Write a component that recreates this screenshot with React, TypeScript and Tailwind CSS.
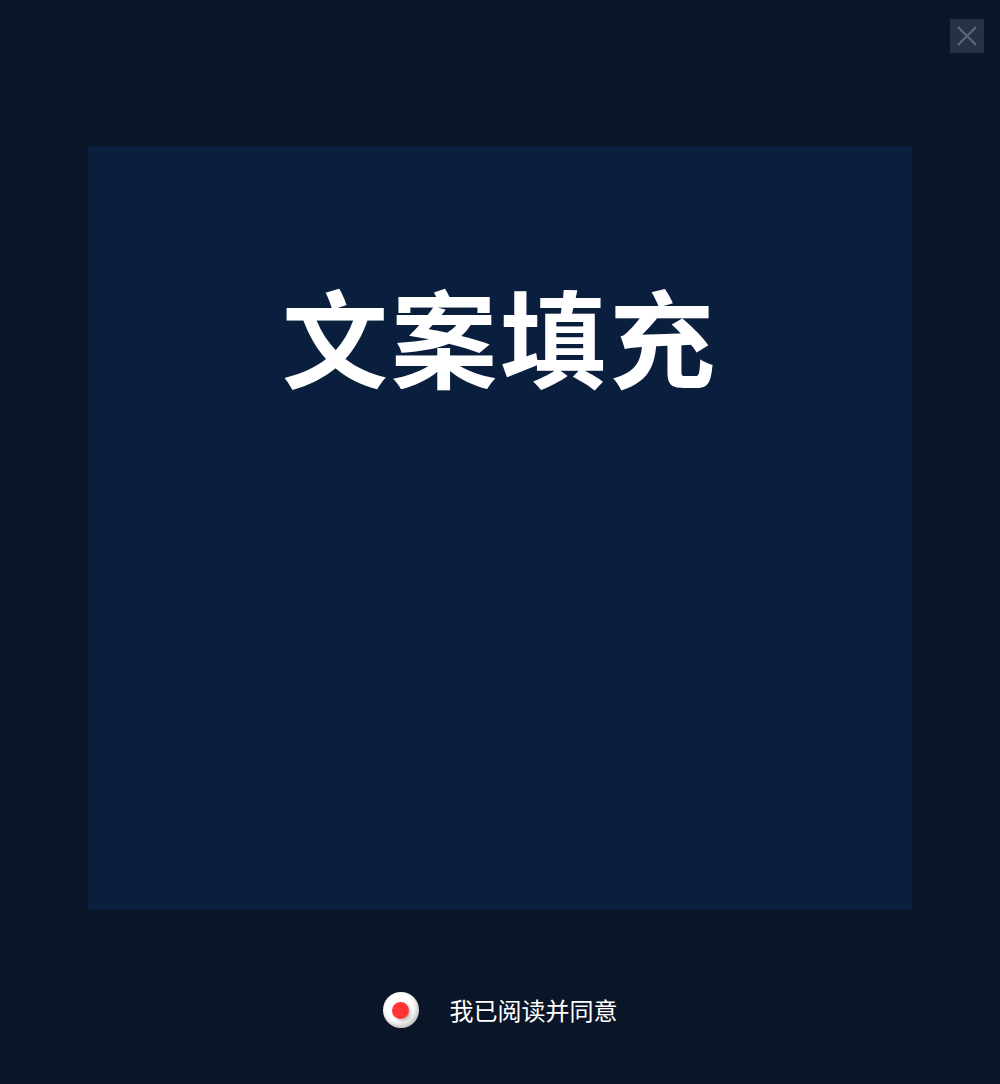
import React, { useState } from 'react';

export default function App() {
  const [agreed, setAgreed] = useState(true);

  return (
    <div
      className="relative w-[1000px] h-[1084px] bg-[#0a1628] flex flex-col items-center"
      style={{ fontFamily: '"Noto Sans CJK SC", "Noto Sans", sans-serif' }}
    >
      {/* close */}
      <button className="absolute top-[19px] right-[16px] w-[34px] h-[34px] bg-[#263243] flex items-center justify-center">
        <svg width="22" height="22" viewBox="0 0 22 22" fill="none" stroke="#5b6778" strokeWidth="2.2">
          <path d="M2 2 L20 20 M20 2 L2 20" />
        </svg>
      </button>

      <div className="mt-[146px] w-[824px] h-[764px] bg-[#0a1f3e] flex justify-center">
        <h1 className="mt-[123px] h-[130px] text-white text-[106px] leading-[130px] font-bold tracking-[3px]">
          文案填充
        </h1>
      </div>

      <div className="mt-[82px] flex items-center gap-[31px]">
        <button
          onClick={() => setAgreed((v) => !v)}
          className="w-[36px] h-[36px] rounded-full bg-white flex items-center justify-center shadow-[inset_-2px_-3px_5px_rgba(0,0,0,0.25)]"
        >
          {agreed && <span className="w-[17px] h-[17px] rounded-full bg-[#ff3434] shadow-[2px_2px_3px_rgba(0,0,0,0.25)]" />}
        </button>
        <span className="text-white text-[24px] leading-[36px] font-normal">我已阅读并同意</span>
      </div>
    </div>
  );
}
